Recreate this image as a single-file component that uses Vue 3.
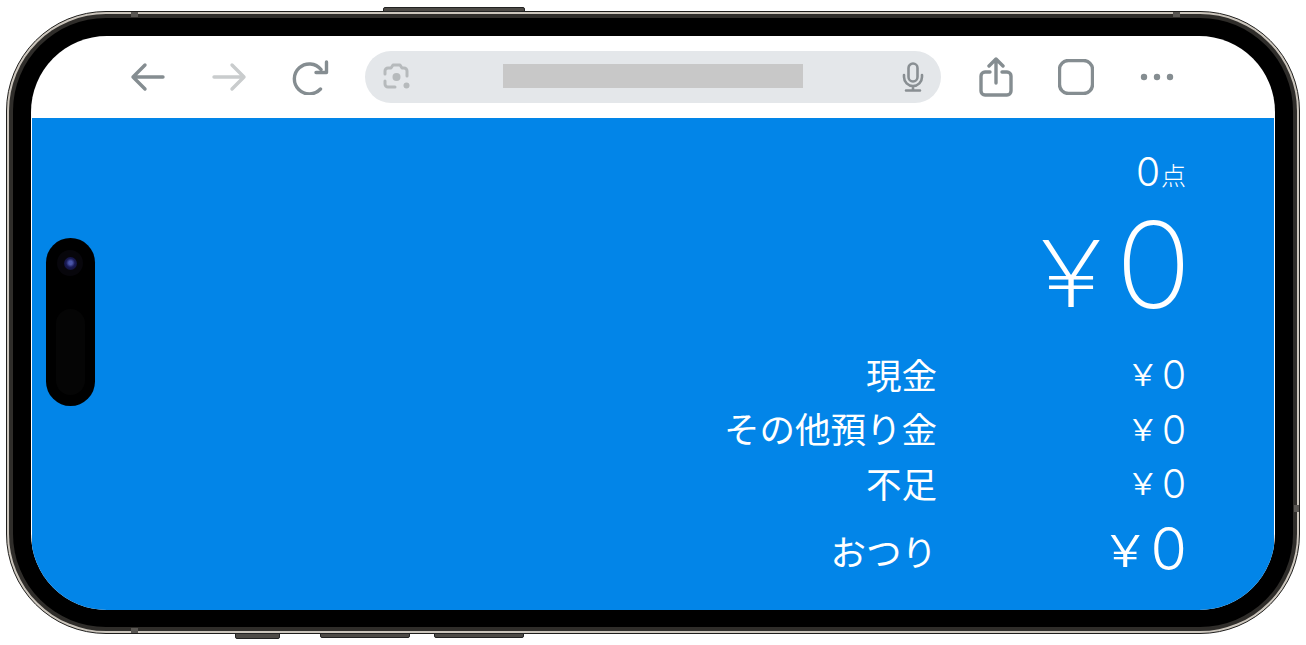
<script setup>
const rows = [
  { label: '現金', value: '0' },
  { label: 'その他預り金', value: '0' },
  { label: '不足', value: '0' },
]
</script>

<template>
  <div class="page">
    <div class="device">
      <i class="btn btn-top"></i>
      <i class="btn btn-b1"></i>
      <i class="btn btn-b2"></i>
      <i class="btn btn-b3"></i>
      <i class="seam seam-t1"></i>
      <i class="seam seam-t2"></i>
      <i class="seam seam-b1"></i>
      <i class="seam seam-r1"></i>
      <div class="rim">
        <div class="band">
          <div class="bezel">
            <div class="screen">
              <header class="toolbar">
                <svg class="ico back" width="36" height="30" viewBox="0 0 36 30"><path d="M3 15H33M15 3 3 15l12 12" /></svg>
                <svg class="ico forward" width="36" height="30" viewBox="0 0 36 30"><path d="M3 15H33M21 3l12 12-12 12" /></svg>
                <svg class="ico reload" width="38" height="36" viewBox="0 0 38 36"><path d="M29 10.500A15 15 0 1 0 28.500 30M34.500 3V13.500H24" /></svg>
                <div class="pill">
                  <svg class="lens" width="30" height="30" viewBox="0 0 30 30">
                    <path d="M3 12V9a3 3 0 0 1 3-3h3l2-3h7l2 3h2a3 3 0 0 1 3 3v5M3 19v3a3 3 0 0 0 3 3h7" />
                    <circle class="fill" cx="14.500" cy="15" r="4" />
                    <circle class="fill" cx="24.500" cy="23.500" r="3" />
                  </svg>
                  <div class="url"></div>
                  <svg class="mic" width="22" height="30" viewBox="0 0 22 30">
                    <rect x="6.500" y="1.500" width="9" height="18" rx="4.500" />
                    <path d="M2 13v2a9 9 0 0 0 18 0v-2M11 24v4M4 28.500H18" />
                  </svg>
                </div>
                <svg class="ico share" width="34" height="40" viewBox="0 0 34 40"><path d="M17 26V2M10 9l7-7 7 7M11 15H6a4 4 0 0 0-4 4v15a4 4 0 0 0 4 4H28a4 4 0 0 0 4-4V19a4 4 0 0 0-4-4H23" /></svg>
                <svg class="ico tabs" width="36" height="36" viewBox="0 0 36 36"><rect x="1.500" y="1.500" width="33" height="33" rx="9" /></svg>
                <svg class="dots" width="34" height="8" viewBox="0 0 34 8">
                  <circle cx="4" cy="4" r="3.200" />
                  <circle cx="17" cy="4" r="3.200" />
                  <circle cx="30" cy="4" r="3.200" />
                </svg>
              </header>
              <main class="content">
                <div class="count"><span class="count-num">0</span><span class="count-unit">点</span></div>
                <div class="total"><span class="total-yen">¥</span><span class="total-num">0</span></div>
                <div class="rows">
                  <div v-for="row in rows" :key="row.label" class="row">
                    <div class="label">{{ row.label }}</div>
                    <div class="value"><span class="yen">¥</span><span class="num">{{ row.value }}</span></div>
                  </div>
                  <div class="row change">
                    <div class="label">おつり</div>
                    <div class="value"><span class="yen">¥</span><span class="num">0</span></div>
                  </div>
                </div>
              </main>
              <div class="island">
                <div class="camera"><div class="lens-glass"></div></div>
                <div class="sensor"></div>
              </div>
            </div>
          </div>
        </div>
      </div>
    </div>
  </div>
</template>

<style>
html, body { margin: 0; background: #fff; }
</style>

<style scoped>
.page {
  width: 1306px;
  height: 645px;
  padding: 11px 0 0 6px;
  box-sizing: border-box;
  background: #fff;
  overflow: hidden;
  font-family: "Noto Sans CJK JP", sans-serif;
}
.device {
  position: relative;
  width: 1294px;
  height: 623px;
}
.rim {
  height: 100%;
  box-sizing: border-box;
  border: 1px solid #1f1e1c;
  border-radius: 100px;
  background: #cbc5bc;
  padding: 2px;
}
.band {
  height: 100%;
  box-sizing: border-box;
  border-radius: 97px;
  background: #2f2d2a;
  padding: 4px;
}
.bezel {
  height: 100%;
  box-sizing: border-box;
  border-radius: 93px;
  background: #000;
  padding: 18px 18px 17px;
}
.screen {
  position: relative;
  height: 100%;
  box-sizing: border-box;
  border-radius: 76px;
  background: #fff;
  overflow: hidden;
  padding: 0 1px;
  display: flex;
  flex-direction: column;
}
.toolbar {
  height: 82px;
  flex: none;
  display: flex;
  align-items: center;
  padding-left: 98px;
}
.ico { fill: none; stroke: #858d91; stroke-width: 3.400; stroke-linecap: round; stroke-linejoin: round; flex: none; }
.forward { margin-left: 45px; stroke: #c9cccd; }
.reload { margin-left: 45px; }
.pill {
  margin-left: 35px;
  width: 576px;
  height: 52px;
  margin-top: -1px;
  border-radius: 26px;
  background: #e4e7ea;
  display: flex;
  align-items: center;
  flex: none;
}
.lens { margin-left: 17px; fill: none; stroke: #b6babc; stroke-width: 3; stroke-linecap: round; stroke-linejoin: round; flex: none; }
.lens .fill { fill: #b6babc; stroke: none; }
.url { margin-left: 91px; width: 300px; height: 24px; margin-top: -1px; background: #c8c8c8; flex: none; }
.mic { margin-left: 99px; fill: none; stroke: #898f93; stroke-width: 2.600; stroke-linecap: round; flex: none; }
.share { margin-left: 38px; margin-top: 0; }
.tabs { margin-left: 45px; margin-top: -1px; }
.dots { margin-left: 46px; margin-top: -1px; fill: #858d91; flex: none; }

.content {
  flex: 1;
  background: #0285e8;
  color: #fff;
  padding: 34px 89px 0 0;
  display: flex;
  flex-direction: column;
  align-items: flex-end;
}
.count {
  height: 40px;
  display: flex;
  align-items: baseline;
  line-height: 40px;
}
.count-num { font: 300 39px/40px Inter, sans-serif; margin-right: -2px; }
.count-unit { font-size: 25px; font-weight: 300; margin-left: 3px; margin-right: -1px; position: relative; top: -1px; }
.total {
  height: 130px;
  margin-top: 8px;
  display: flex;
  align-items: center;
  justify-content: flex-end;
  line-height: 130px;
}
.total-yen {
  font: 200 92px/130px Inter, sans-serif;
  margin-right: 17px;
  margin-top: 18px;
  transform: scaleX(1.26);
  transform-origin: right;
}
.total-num { font: 200 120px/130px Inter, sans-serif; margin-right: -6px; transform: scaleX(1.05); transform-origin: right; }
.rows { margin-top: 18px; width: 100%; }
.row {
  display: grid;
  grid-template-columns: 1fr 248px;
  height: 54.500px;
  align-items: center;
}
.label { text-align: right; font-size: 35.500px; line-height: 54px; font-weight: 400; margin-top: -3px; }
.value { display: flex; justify-content: flex-end; align-items: center; }
.yen { font: 300 30px/54px Inter, sans-serif; margin-right: 9px; transform: scaleX(1.3); transform-origin: right; }
.num { font: 300 39px/54px Inter, sans-serif; margin-right: -1px; }
.change { margin-top: 14px; }
.change .value { margin-top: -8px; }
.change .yen { font-size: 44px; font-weight: 300; margin-right: 10px; margin-top: 5px; }
.change .num { font-size: 59px; font-weight: 300; margin-right: -2px; }

.island {
  position: absolute;
  left: 15px;
  top: 202px;
  width: 49px;
  height: 168px;
  border-radius: 25px;
  background: #000;
}
.camera {
  position: absolute;
  left: 11px;
  top: 12px;
  width: 26px;
  height: 26px;
  border-radius: 50%;
  background: #07060b;
  display: flex;
  align-items: center;
  justify-content: center;
}
.lens-glass {
  width: 13px;
  height: 13px;
  border-radius: 50%;
  background: radial-gradient(circle at 50% 45%, #4a55a8 0 18%, #191a55 45%, #0b0b24 100%);
}
.sensor {
  position: absolute;
  left: 10px;
  top: 71px;
  width: 29px;
  height: 86px;
  border-radius: 15px;
  background: #050505;
}

.btn {
  position: absolute;
  box-sizing: border-box;
  background: #4d4a46;
  border: 1px solid #222;
}
.btn-top { left: 377px; top: -4px; width: 142px; height: 5px; border-radius: 2px 2px 0 0; }
.btn-b1 { left: 229px; top: 622px; width: 45px; height: 6px; border-radius: 0 0 2px 2px; }
.btn-b2 { left: 314px; top: 622px; width: 90px; height: 5px; border-radius: 0 0 2px 2px; }
.btn-b3 { left: 428px; top: 622px; width: 90px; height: 5px; border-radius: 0 0 2px 2px; }
.seam { position: absolute; background: #5a5753; z-index: 1; }
.seam-t1 { left: 125px; top: 1px; width: 7px; height: 5px; }
.seam-t2 { left: 1167px; top: 1px; width: 7px; height: 5px; }
.seam-b1 { left: 125px; top: 617px; width: 7px; height: 5px; }
.seam-r1 { left: 1288px; top: 494px; width: 5px; height: 7px; }
</style>
